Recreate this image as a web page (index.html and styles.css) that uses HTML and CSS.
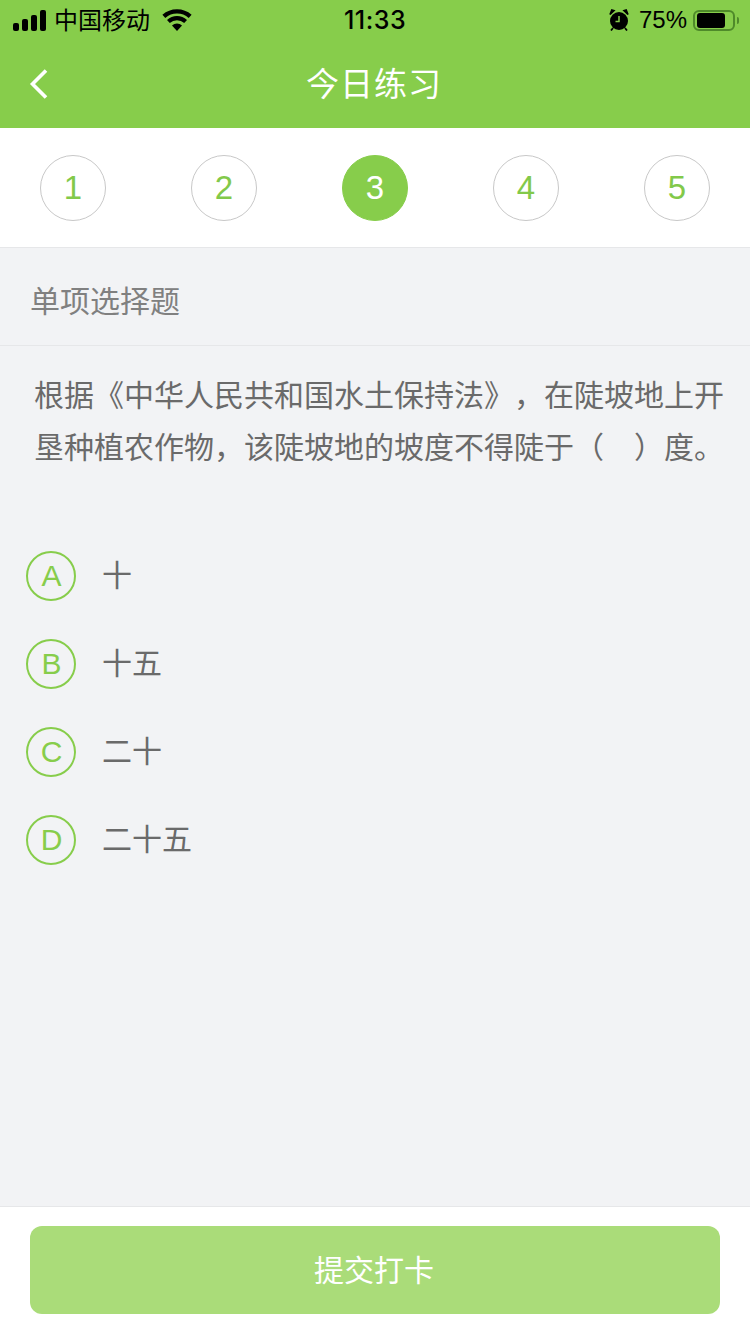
FILE: index.html
```html
<!DOCTYPE html>
<html lang="zh-CN">
<head>
    <meta charset="UTF-8">
    <meta name="viewport" content="width=device-width, initial-scale=1.0">
    <title>今日练习</title>
    <link rel="stylesheet" href="styles.css">
</head>
<body>
    <div class="page">
        <!-- Status bar and nav -->
        <header class="top">
            <div class="status">
                <div class="status-left">
                    <svg class="signal" width="34" height="21" viewBox="0 0 34 21">
                        <rect x="0" y="13" width="6" height="8" rx="2"/>
                        <rect x="9" y="9" width="6" height="12" rx="2"/>
                        <rect x="18" y="5" width="6" height="16" rx="2"/>
                        <rect x="27" y="0" width="6" height="21" rx="2"/>
                    </svg>
                    <span class="carrier">中国移动</span>
                    <svg class="wifi" width="30" height="22" viewBox="0 0 30 22">
                        <path d="M15 22l-5-5.6a7.4 7.4 0 0 1 10 0z"/>
                        <path d="M7.8 14L5 10.9a15 15 0 0 1 20 0L22.2 14a10.8 10.8 0 0 0-14.4 0z"/>
                        <path d="M3.3 9L.4 5.8a22 22 0 0 1 29.2 0L26.7 9a17.7 17.7 0 0 0-23.4 0z"/>
                    </svg>
                </div>
                <div class="clock">11:33</div>
                <div class="status-right">
                    <svg class="alarm" width="20" height="22" viewBox="0 0 20 22">
                        <circle cx="10" cy="12" r="9"/>
                        <path d="M1 5.5L5 1.600 2.800 1zM19 5.500L15 1.600l2.200-.6z" stroke="#000" stroke-width="1.600"/>
                        <path d="M10 7V12.500H6.500" fill="none" stroke="#87cd4b" stroke-width="1.500"/>
                        <path d="M4 19l-2 2.500M16 19l2 2.500" stroke="#000" stroke-width="1.800"/>
                    </svg>
                    <span class="percent">75%</span>
                    <div class="battery">
                        <div class="battery-fill"></div>
                    </div>
                    <div class="battery-cap"></div>
                </div>
            </div>
            <div class="nav">
                <svg class="back" width="20" height="32" viewBox="0 0 20 32">
                    <path d="M17 2.500L3.500 16 17 29.500" fill="none" stroke="#fff" stroke-width="3.600"/>
                </svg>
                <h1 class="title">今日练习</h1>
            </div>
        </header>

        <!-- Question numbers -->
        <div class="steps">
            <span class="step">1</span>
            <span class="step">2</span>
            <span class="step active">3</span>
            <span class="step">4</span>
            <span class="step">5</span>
        </div>

        <div class="type">单项选择题</div>

        <p class="question">根据《中华人民共和国水土保持法》，在陡坡地上开垦种植农作物，该陡坡地的坡度不得陡于（　）度。</p>

        <ul class="options">
            <li class="option"><span class="letter">A</span><span class="answer">十</span></li>
            <li class="option"><span class="letter">B</span><span class="answer">十五</span></li>
            <li class="option"><span class="letter">C</span><span class="answer">二十</span></li>
            <li class="option"><span class="letter">D</span><span class="answer">二十五</span></li>
        </ul>

        <footer class="bottom">
            <button class="submit">提交打卡</button>
        </footer>
    </div>
</body>
</html>
```

FILE: styles.css
```css
* {
    box-sizing: border-box;
}

html, body {
    margin: 0;
    padding: 0;
}

body {
    font-family: "Liberation Sans", "Noto Sans CJK SC", sans-serif;
    background-color: #f2f3f5;
}

.page {
    width: 750px;
    height: 1334px;
    display: flex;
    flex-direction: column;
    overflow: hidden;
}

/* Status bar and nav */
.top {
    height: 128px;
    background-color: #87cd4b;
    flex-shrink: 0;
}

.status {
    height: 40px;
    padding: 0 11px 0 13px;
    display: grid;
    grid-template-columns: 1fr auto 1fr;
    align-items: center;
    color: #000;
}

.status-left {
    display: flex;
    align-items: center;
}

.signal {
    margin-right: 7px;
}

.carrier {
    font-size: 24px;
    margin-right: 12px;
    padding-bottom: 3px;
}

.clock {
    font-family: "Inter", "Liberation Sans", sans-serif;
    font-size: 25px;
    font-weight: 500;
    letter-spacing: 0.5px;
    padding-right: 2px;
}

.status-right {
    display: flex;
    align-items: center;
    justify-content: flex-end;
}

.alarm {
    margin-right: 10px;
}

.percent {
    font-size: 24px;
    margin-right: 6px;
}

.battery {
    width: 42px;
    height: 21px;
    border: 2px solid #4f8a2a;
    border-radius: 6px;
    padding: 1px 2px;
}

.battery-fill {
    width: 28px;
    height: 15px;
    background-color: #000;
    border-radius: 3px;
}

.battery-cap {
    width: 2px;
    height: 7px;
    margin-left: 2px;
    background-color: #4f8a2a;
    border-radius: 0 2px 2px 0;
}

.nav {
    height: 88px;
    padding: 0 2px 4px 0;
    display: flex;
    align-items: center;
    justify-content: center;
    position: relative;
}

.back {
    position: absolute;
    left: 29px;
    top: 28px;
}

.title {
    margin: 0;
    color: #fff;
    font-size: 33px;
    font-weight: 400;
    letter-spacing: 1px;
}

/* Question numbers */
.steps {
    height: 120px;
    flex-shrink: 0;
    padding: 0 40px;
    background-color: #fff;
    border-bottom: 1px solid #e6e7e9;
    display: flex;
    align-items: center;
    justify-content: space-between;
}

.step {
    width: 66px;
    height: 66px;
    border: 1px solid #c8c8c8;
    border-radius: 50%;
    display: flex;
    align-items: center;
    justify-content: center;
    color: #82c94a;
    font-size: 33px;
}

.step.active {
    background-color: #87cd4b;
    border-color: #87cd4b;
    color: #fff;
}

.type {
    height: 98px;
    flex-shrink: 0;
    padding: 4px 0 0 30px;
    border-bottom: 1px solid #e6e7e9;
    display: flex;
    align-items: center;
    color: #808080;
    font-size: 30px;
}

.question {
    margin: 0;
    padding: 24px 20px 0 34px;
    color: #6a6a6a;
    font-size: 30px;
    line-height: 52px;
    text-spacing-trim: space-all;
    flex-shrink: 0;
}

.options {
    list-style: none;
    margin: 0;
    padding: 58px 0 0 26px;
    flex: 1;
}

.option {
    height: 88px;
    display: flex;
    align-items: center;
}

.letter {
    width: 50px;
    height: 50px;
    padding-left: 1px;
    border: 2px solid #87cd4b;
    border-radius: 50%;
    display: flex;
    align-items: center;
    justify-content: center;
    color: #87cd4b;
    font-size: 30px;
    margin-right: 26px;
}

.answer {
    color: #6a6a6a;
    font-size: 30px;
    padding-bottom: 6px;
}

/* Submit */
.bottom {
    height: 128px;
    flex-shrink: 0;
    padding: 19px 30px 20px;
    background-color: #fff;
    border-top: 1px solid #e6e7e9;
}

.submit {
    display: block;
    width: 100%;
    height: 88px;
    padding: 0 2px 4px 0;
    border: none;
    border-radius: 12px;
    background-color: #aadc79;
    color: #fff;
    font-family: inherit;
    font-size: 30px;
}
```
